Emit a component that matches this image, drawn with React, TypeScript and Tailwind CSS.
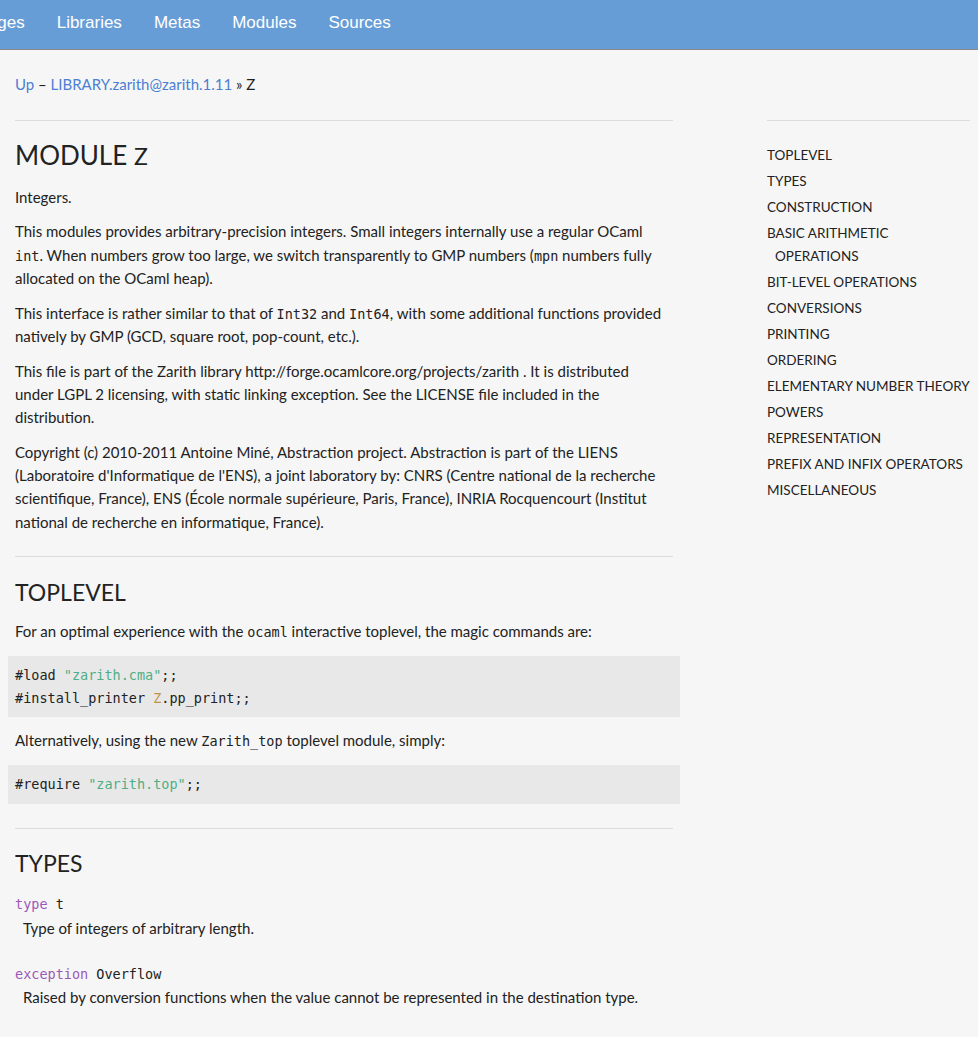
import React from "react";

const sans = { fontFamily: "Lato, 'Open Sans', sans-serif" };

function C({ children }: { children: React.ReactNode }) {
  return <code className="font-['DejaVu_Sans_Mono',monospace] text-[13.5px] leading-none">{children}</code>;
}

const toc: string[] = [
  "Toplevel",
  "Types",
  "Construction",
  "Basic arithmetic operations",
  "Bit-level operations",
  "Conversions",
  "Printing",
  "Ordering",
  "Elementary number theory",
  "Powers",
  "Representation",
  "Prefix and infix operators",
  "Miscellaneous",
];

export default function App() {
  return (
    <div className="min-h-[1037px] bg-[#f6f6f6] text-[#222] overflow-hidden font-['Lato',sans-serif]">
      <nav className="h-[50px] bg-[#679dd7] border-b border-[#888] flex items-center pb-[4px] font-['Liberation_Sans',Arial,sans-serif] text-[17px] text-white">
        <ul className="flex gap-8 ml-[-50px]">
          <li>Packages</li>
          <li>Libraries</li>
          <li>Metas</li>
          <li>Modules</li>
          <li>Sources</li>
        </ul>
      </nav>

      <div className="pl-[15px] pt-[23px] text-[15px] leading-[23px]">
        <a className="text-[#4b7fd3]">Up</a> – <a className="text-[#4b7fd3]">LIBRARY.zarith@zarith.1.11</a> » Z
      </div>

      <div className="flex pl-[15px] mt-[24px] gap-[94px]">
        <main className="w-[658px] border-t border-[#ddd] text-[15px] leading-[23.3px]">
          <h1 className="mt-[17px] text-[26px] leading-[34px] font-normal">
            MODULE <span className="text-[23px]">Z</span>
          </h1>
          <p className="mt-[13px]">Integers.</p>
          <p className="mt-[11px]">
            This modules provides arbitrary-precision integers. Small integers internally use a regular OCaml{" "}
            <C>int</C>. When numbers grow too large, we switch transparently to GMP numbers (<C>mpn</C> numbers fully
            allocated on the OCaml heap).
          </p>
          <p className="mt-[12px]">
            This interface is rather similar to that of <C>Int32</C> and <C>Int64</C>, with some additional functions
            provided natively by GMP (GCD, square root, pop-count, etc.).
          </p>
          <p className="mt-[11px]">
            This file is part of the Zarith library http://forge.ocamlcore.org/projects/zarith . It is distributed
            <br />
            under LGPL 2 licensing, with static linking exception. See the LICENSE file included in the
            <br />
            distribution.
          </p>
          <p className="mt-[11px]">
            Copyright (c) 2010-2011 Antoine Miné, Abstraction project. Abstraction is part of the LIENS (Laboratoire
            d'Informatique de l'ENS), a joint laboratory by: CNRS (Centre national de la recherche scientifique,
            France), ENS (École normale supérieure, Paris, France), INRIA Rocquencourt (Institut national de recherche
            en informatique, France).
          </p>

          <section className="mt-[22px] border-t border-[#ddd]">
            <h2 className="mt-[21px] text-[23px] leading-[29px] font-normal">TOPLEVEL</h2>
            <p className="mt-[13px]">
              For an optimal experience with the <C>ocaml</C> interactive toplevel, the magic commands are:
            </p>
            <pre className="mt-[13px] mx-[-7px] px-[7px] py-[7.5px] bg-[#e8e8e8] font-['DejaVu_Sans_Mono',monospace] text-[13.5px] leading-[23px]">
              #load <span className="text-[#4fae86]">"zarith.cma"</span>;;{"\n"}#install_printer{" "}
              <span className="text-[#c0934a]">Z</span>.pp_print;;
            </pre>
            <p className="mt-[12px]">
              Alternatively, using the new <C>Zarith_top</C> toplevel module, simply:
            </p>
            <pre className="mt-[13px] mx-[-7px] px-[7px] py-[8px] bg-[#e8e8e8] font-['DejaVu_Sans_Mono',monospace] text-[13.5px] leading-[23px]">
              #require <span className="text-[#4fae86]">"zarith.top"</span>;;
            </pre>
          </section>

          <section className="mt-[24px] border-t border-[#ddd]">
            <h2 className="mt-[20px] text-[23px] leading-[29px] font-normal">TYPES</h2>
            <div className="mt-[15px]">
              <div className="font-['DejaVu_Sans_Mono',monospace] text-[13.5px] leading-[23.3px]">
                <span className="text-[#9b59b6]">type</span> t
              </div>
              <div className="pl-[8px]">Type of integers of arbitrary length.</div>
            </div>
            <div className="mt-[23px]">
              <div className="font-['DejaVu_Sans_Mono',monospace] text-[13.5px] leading-[23.3px]">
                <span className="text-[#9b59b6]">exception</span> Overflow
              </div>
              <div className="pl-[8px]">Raised by conversion functions when the value cannot be represented in the destination type.</div>
            </div>
          </section>
        </main>

        <aside className="w-[203px] shrink-0 border-t border-[#ddd] text-[13.5px] leading-[23px]" style={sans}>
          <ul className="mt-[23px]">
            {toc.map((t) => (
              <li key={t} className="uppercase mb-[3px] pl-[8px] indent-[-8px]">
                {t}
              </li>
            ))}
          </ul>
        </aside>
      </div>
    </div>
  );
}
